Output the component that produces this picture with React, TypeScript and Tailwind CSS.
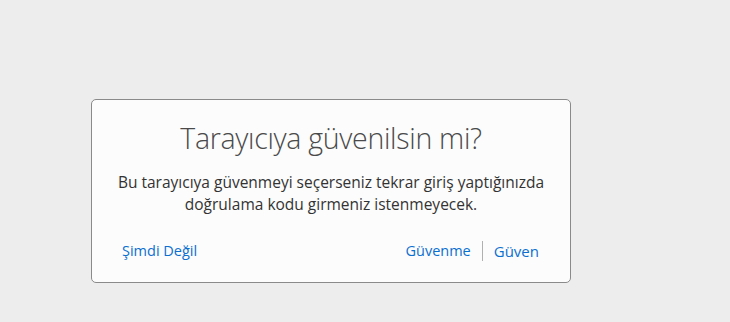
import React from "react";

export default function App() {
  return (
    <div className="w-[730px] h-[322px] bg-[#ededed] pt-[99px] pl-[91px]" style={{ fontFamily: '"Open Sans", "Noto Sans", sans-serif' }}>
      <div className="w-[480px] h-[184px] bg-[#fcfcfc] border border-[#8a8a8a] rounded-[5px] flex flex-col items-center">
        <h1 className="mt-[18px] text-[28.5px] leading-[40px] font-light text-[#4a4a4a] tracking-[-0.3px]">Tarayıcıya güvenilsin mi?</h1>
        <p className="mt-[13px] text-[15.5px] leading-[22px] text-[#333] text-center">
          Bu tarayıcıya güvenmeyi seçerseniz tekrar giriş yaptığınızda
          <br />
          doğrulama kodu girmeniz istenmeyecek.
        </p>
        <div className="mt-[25px] w-full flex items-center justify-between pl-[30px] pr-[31px] text-[14.5px] text-[#0b6fd0]">
          <span>Şimdi Değil</span>
          <div className="flex items-center">
            <span>Güvenme</span>
            <span className="mx-[11px] w-px h-[20px] bg-[#b0b0b0]" />
            <span className="text-[15px]">Güven</span>
          </div>
        </div>
      </div>
    </div>
  );
}
